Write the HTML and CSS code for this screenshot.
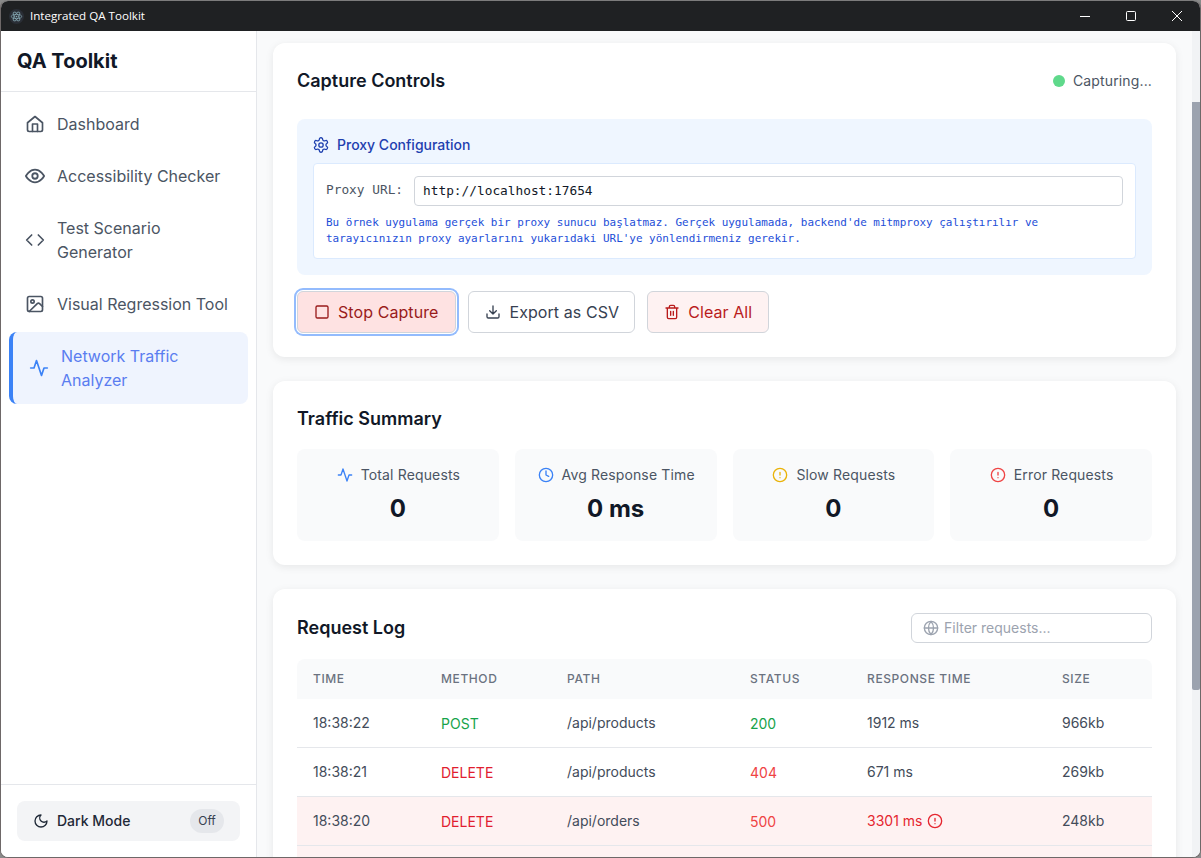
FILE: index.html
```html
<!DOCTYPE html>
<html lang="en">
<head>
  <meta charset="UTF-8" />
  <title>Integrated QA Toolkit</title>
  <link rel="stylesheet" href="styles.css">
</head>
<body>
<div class="window">

  <div class="titlebar">
    <div class="app-title">
      <svg class="app-logo" viewBox="0 0 16 16" fill="none" stroke="#86a9b5" stroke-width="0.8">
        <circle cx="8" cy="8" r="8" fill="#2a2e36" stroke="none"/>
        <ellipse cx="8" cy="8" rx="5.500" ry="2.200"/>
        <ellipse cx="8" cy="8" rx="5.500" ry="2.200" transform="rotate(60 8 8)"/>
        <ellipse cx="8" cy="8" rx="5.500" ry="2.200" transform="rotate(120 8 8)"/>
        <circle cx="8" cy="8" r="0.900" fill="#86a9b5" stroke="none"/>
      </svg>
      <span class="app-name">Integrated QA Toolkit</span>
    </div>
    <div class="win-buttons">
      <svg viewBox="0 0 12 12" class="win-btn" fill="none" stroke="#fff"><path d="M1 6.5h10"/></svg>
      <svg viewBox="0 0 12 12" class="win-btn" fill="none" stroke="#fff"><rect x="1.5" y="1.5" width="9" height="9" rx="1"/></svg>
      <svg viewBox="0 0 12 12" class="win-btn" fill="none" stroke="#fff"><path d="M1 1l10 10M11 1L1 11"/></svg>
    </div>
  </div>

  <div class="app">
    <aside class="sidebar">
      <div class="brand">QA Toolkit</div>
      <nav class="nav">
        <a class="nav-item">
          <svg class="ico ico-20" viewBox="0 0 24 24"><path d="M3 10.5 12 3l9 7.5V19a2 2 0 0 1-2 2H5a2 2 0 0 1-2-2z"/><path d="M9 21v-9h6v9"/></svg>
          <span>Dashboard</span>
        </a>
        <a class="nav-item">
          <svg class="ico ico-20" viewBox="1 1 22 22"><path d="M2 12s3.600-7 10-7 10 7 10 7-3.600 7-10 7-10-7-10-7z"/><circle cx="12" cy="12" r="3"/></svg>
          <span>Accessibility Checker</span>
        </a>
        <a class="nav-item">
          <svg class="ico ico-20" viewBox="0 0 24 24"><path d="m8 6-6 6 6 6M16 6l6 6-6 6"/></svg>
          <span>Test Scenario Generator</span>
        </a>
        <a class="nav-item">
          <svg class="ico ico-20" viewBox="0 0 24 24"><rect x="3" y="3" width="18" height="18" rx="2"/><circle cx="9" cy="9" r="2"/><path d="m21 15-3.500-3.500a2 2 0 0 0-2.800 0L5 21"/></svg>
          <span>Visual Regression Tool</span>
        </a>
        <a class="nav-item active">
          <svg class="ico ico-20" viewBox="0 0 24 24"><path d="M22 12h-4l-3 9L9 3l-3 9H2"/></svg>
          <span>Network Traffic Analyzer</span>
        </a>
      </nav>
      <div class="sidebar-foot">
        <div class="dark-toggle">
          <svg class="ico ico-16" viewBox="0 0 24 24"><path d="M12 3a6 6 0 0 0 9 9 9 9 0 1 1-9-9z"/></svg>
          <span class="dark-label">Dark Mode</span>
          <span class="pill">Off</span>
        </div>
      </div>
    </aside>

    <main class="main">
      <section class="card">
        <div class="card-head">
          <h2>Capture Controls</h2>
          <div class="capturing"><i class="dot"></i>Capturing...</div>
        </div>
        <div class="proxy-box">
          <div class="proxy-title">
            <svg class="ico ico-16 thin" viewBox="1 1 22 22"><path d="M12.220 2h-.44a2 2 0 0 0-2 2v.18a2 2 0 0 1-1 1.730l-.43.25a2 2 0 0 1-2 0l-.15-.08a2 2 0 0 0-2.730.73l-.22.38a2 2 0 0 0 .73 2.730l.15.1a2 2 0 0 1 1 1.720v.51a2 2 0 0 1-1 1.740l-.15.09a2 2 0 0 0-.73 2.730l.22.38a2 2 0 0 0 2.730.73l.15-.08a2 2 0 0 1 2 0l.43.25a2 2 0 0 1 1 1.730V20a2 2 0 0 0 2 2h.44a2 2 0 0 0 2-2v-.18a2 2 0 0 1 1-1.730l.43-.25a2 2 0 0 1 2 0l.15.08a2 2 0 0 0 2.730-.73l.22-.39a2 2 0 0 0-.73-2.730l-.15-.08a2 2 0 0 1-1-1.740v-.5a2 2 0 0 1 1-1.740l.15-.09a2 2 0 0 0 .73-2.730l-.22-.38a2 2 0 0 0-2.730-.73l-.15.08a2 2 0 0 1-2 0l-.43-.25a2 2 0 0 1-1-1.730V4a2 2 0 0 0-2-2z"/><circle cx="12" cy="12" r="3"/></svg>
            <span>Proxy Configuration</span>
          </div>
          <div class="proxy-inner">
            <div class="proxy-row">
              <label class="proxy-label">Proxy URL:</label>
              <div class="proxy-input">http://localhost:17654</div>
            </div>
            <p class="proxy-note">Bu örnek uygulama gerçek bir proxy sunucu başlatmaz. Gerçek uygulamada, backend'de mitmproxy çalıştırılır ve tarayıcınızın proxy ayarlarını yukarıdaki URL'ye yönlendirmeniz gerekir.</p>
          </div>
        </div>
        <div class="actions">
          <button class="btn btn-stop">
            <svg class="ico ico-16" viewBox="0 0 24 24"><rect x="3" y="3" width="18" height="18" rx="2"/></svg>
            Stop Capture
          </button>
          <button class="btn btn-export">
            <svg class="ico ico-16" viewBox="0 0 24 24"><path d="M21 15v4a2 2 0 0 1-2 2H5a2 2 0 0 1-2-2v-4"/><path d="m7 10 5 5 5-5M12 15V3"/></svg>
            Export as CSV
          </button>
          <button class="btn btn-clear">
            <svg class="ico ico-16" viewBox="0 0 24 24"><path d="M3 6h18M19 6v14a2 2 0 0 1-2 2H7a2 2 0 0 1-2-2V6M8 6V4a2 2 0 0 1 2-2h4a2 2 0 0 1 2 2v2M10 11v6M14 11v6"/></svg>
            Clear All
          </button>
        </div>
      </section>

      <section class="card">
        <h2 class="summary-title">Traffic Summary</h2>
        <div class="stats">
          <div class="stat">
            <div class="stat-label">
              <svg class="ico ico-16 c-blue" viewBox="0 0 24 24"><path d="M22 12h-4l-3 9L9 3l-3 9H2"/></svg>
              Total Requests
            </div>
            <div class="stat-value">0</div>
          </div>
          <div class="stat">
            <div class="stat-label">
              <svg class="ico ico-16 c-blue" viewBox="0 0 24 24"><circle cx="12" cy="12" r="10"/><path d="M12 6v6l4 2"/></svg>
              Avg Response Time
            </div>
            <div class="stat-value">0 ms</div>
          </div>
          <div class="stat">
            <div class="stat-label">
              <svg class="ico ico-16 c-yellow" viewBox="0 0 24 24"><circle cx="12" cy="12" r="10"/><path d="M12 8v4M12 16h.01"/></svg>
              Slow Requests
            </div>
            <div class="stat-value">0</div>
          </div>
          <div class="stat">
            <div class="stat-label">
              <svg class="ico ico-16 c-red" viewBox="0 0 24 24"><circle cx="12" cy="12" r="10"/><path d="M12 8v4M12 16h.01"/></svg>
              Error Requests
            </div>
            <div class="stat-value">0</div>
          </div>
        </div>
      </section>

      <section class="card card-log">
        <div class="log-head">
          <h2>Request Log</h2>
          <div class="filter">
            <svg class="ico ico-16" viewBox="0 0 24 24"><circle cx="12" cy="12" r="10"/><path d="M2 12h20M12 2a15 15 0 0 1 0 20 15 15 0 0 1 0-20z"/></svg>
            <span>Filter requests...</span>
          </div>
        </div>
        <table class="log">
          <thead>
            <tr>
              <th class="col-time">Time</th>
              <th class="col-method">Method</th>
              <th class="col-path">Path</th>
              <th class="col-status">Status</th>
              <th class="col-resp">Response Time</th>
              <th class="col-size">Size</th>
            </tr>
          </thead>
          <tbody>
            <tr>
              <td>18:38:22</td>
              <td class="tag method-ok">POST</td>
              <td>/api/products</td>
              <td class="tag status-ok">200</td>
              <td>1912 ms</td>
              <td>966kb</td>
            </tr>
            <tr>
              <td>18:38:21</td>
              <td class="tag method-bad">DELETE</td>
              <td>/api/products</td>
              <td class="tag status-bad">404</td>
              <td>671 ms</td>
              <td>269kb</td>
            </tr>
            <tr class="row-bad">
              <td>18:38:20</td>
              <td class="tag method-bad">DELETE</td>
              <td>/api/orders</td>
              <td class="tag status-bad">500</td>
              <td class="slow">3301 ms
                <svg class="ico ico-16" viewBox="0 0 24 24"><circle cx="12" cy="12" r="10"/><path d="M12 8v4M12 16h.01"/></svg>
              </td>
              <td>248kb</td>
            </tr>
            <tr class="row-bad">
              <td></td><td></td><td></td><td></td><td></td><td></td>
            </tr>
          </tbody>
        </table>
      </section>
    </main>

    <div class="scrollbar"><div class="thumb"></div></div>
  </div>
</div>
</body>
</html>
```

FILE: styles.css
```css
* { box-sizing: border-box; }

html, body {
  height: 100%;
  margin: 0;
  background: #8a8a8a;
  overflow: hidden;
}

body {
  font-family: Inter, "Noto Sans", sans-serif;
  font-size: 14px;
  line-height: 20px;
  color: #374151;
}

.window {
  height: 100vh;
  display: flex;
  flex-direction: column;
  border: 1px solid #6e6868;
  border-top-color: #7c7c7c;
  border-radius: 8px;
  overflow: hidden;
  background: #fff;
}

/* title bar */
.titlebar {
  height: 30px;
  flex: none;
  background: #1f2123;
  color: #fff;
  display: flex;
  align-items: center;
  justify-content: space-between;
  font-family: "Open Sans", sans-serif;
  font-size: 11.600px;
}

.app-title {
  display: flex;
  align-items: center;
  gap: 6px;
  padding-left: 8px;
}

.app-name { padding-bottom: 1px; }

.app-logo { width: 15px; height: 15px; }

.win-buttons { display: flex; }

.win-btn {
  width: 12px;
  height: 12px;
  margin: 0 17px 0 17px;
}

/* layout */
.app {
  flex: 1;
  min-height: 0;
  display: flex;
}

.sidebar {
  width: 256px;
  flex: none;
  display: flex;
  flex-direction: column;
  background: #fff;
  border-right: 1px solid #e5e7eb;
}

.brand {
  height: 61px;
  padding: 0 16px;
  display: flex;
  align-items: center;
  font-size: 20px;
  font-weight: 700;
  color: #111827;
  border-bottom: 1px solid #e5e7eb;
}

.nav {
  flex: 1;
  padding: 8px;
  display: flex;
  flex-direction: column;
  gap: 4px;
}

.nav-item {
  display: flex;
  align-items: center;
  gap: 12px;
  padding: 12px 16px;
  font-size: 16px;
  line-height: 24px;
  color: #4b5563;
  border-radius: 8px;
}

.nav-item.active {
  background: #eff4fe;
  color: #5a7df0;
  border-left: 4px solid #3b82f6;
}

.nav-item.active .ico { color: #3b82f6; }

.ico {
  flex: none;
  fill: none;
  stroke: currentColor;
  stroke-width: 2;
  stroke-linecap: round;
  stroke-linejoin: round;
}

.ico-20 { width: 20px; height: 20px; }
.ico-16 { width: 16px; height: 16px; }

.sidebar-foot {
  padding: 16px;
  border-top: 1px solid #e5e7eb;
}

.dark-toggle {
  height: 40px;
  display: flex;
  align-items: center;
  padding: 0 16px;
  gap: 8px;
  background: #f3f4f6;
  border-radius: 8px;
  color: #1f2937;
}

.dark-label { font-weight: 500; flex: 1; }

.pill {
  width: 34px;
  height: 24px;
  line-height: 24px;
  text-align: center;
  font-size: 12px;
  color: #374151;
  background: #e5e7eb;
  border-radius: 12px;
}

/* main column */
.main {
  flex: 1;
  min-width: 0;
  overflow: hidden;
  padding: 12px 16px 0;
  background: #f9fafb;
  display: flex;
  flex-direction: column;
  gap: 24px;
}

.scrollbar {
  width: 8px;
  flex: none;
  background: #f1f3f5;
  padding-top: 71px;
}

.thumb {
  height: 588px;
  background: #9ca3af;
  border-radius: 0 0 2px 2px;
}

.card {
  flex: none;
  background: #fff;
  border-radius: 12px;
  padding: 24px;
  box-shadow: 0 2px 8px rgba(0, 0, 0, 0.08);
}

.card-log { padding-bottom: 0; }

h2 {
  margin: 0;
  font-size: 18px;
  line-height: 28px;
  font-weight: 600;
  color: #111827;
}

.card-head {
  display: flex;
  align-items: center;
  justify-content: space-between;
  margin-bottom: 24px;
}

.capturing {
  display: flex;
  align-items: center;
  gap: 8px;
  color: #4b5563;
  letter-spacing: 0.01em;
}

.dot {
  width: 12px;
  height: 12px;
  border-radius: 50%;
  background: #5fd98b;
}

.proxy-box {
  background: #eff6ff;
  border-radius: 8px;
  padding: 16px;
}

.proxy-title {
  display: flex;
  align-items: center;
  gap: 8px;
  height: 20px;
  margin-bottom: 8px;
  font-weight: 500;
  color: #1e40af;
}

.thin { stroke-width: 1.800; }

.proxy-inner {
  background: #fff;
  border: 1px solid #dbeafe;
  border-radius: 4px;
  padding: 12px;
  height: 96px;
}

.proxy-row {
  display: flex;
  align-items: center;
  gap: 11px;
  margin-bottom: 9px;
}

.proxy-label {
  font-family: "DejaVu Sans Mono", monospace;
  font-size: 12.800px;
  line-height: 18px;
  padding-bottom: 2px;
  color: #4b5563;
}

.proxy-input {
  flex: 1;
  height: 30px;
  line-height: 28px;
  padding: 0 8px;
  border: 1px solid #d1d5db;
  border-radius: 4px;
  font-family: "DejaVu Sans Mono", monospace;
  font-size: 12.800px;
  color: #111827;
}

.proxy-note {
  margin: 0;
  font-family: "DejaVu Sans Mono", monospace;
  font-size: 10.960px;
  line-height: 16px;
  color: #1d4ed8;
}

.actions {
  display: flex;
  gap: 12px;
  margin-top: 16px;
}

.btn {
  height: 42px;
  display: flex;
  align-items: center;
  gap: 8px;
  padding: 0 16px;
  font-family: inherit;
  font-size: 16px;
  letter-spacing: 0.005em;
  border: 1px solid #d1d5db;
  border-radius: 6px;
  background: #fff;
}

.btn-stop {
  padding-right: 17px;
  background: #fee2e2;
  color: #991b1b;
  box-shadow: 0 0 0 1px #fff, 0 0 0 3px #93bbfd;
}

.btn-export {
  padding-right: 15px;
  color: #374151;
}

.btn-clear {
  background: #fef2f2;
  color: #b91c1c;
}

/* summary */
.summary-title { margin-bottom: 16px; }

.stats {
  display: grid;
  grid-template-columns: repeat(4, 1fr);
  gap: 16px;
}

.stat {
  background: #f9fafb;
  border-radius: 8px;
  padding: 16px;
  text-align: center;
}

.stat-label {
  display: flex;
  align-items: center;
  justify-content: center;
  gap: 8px;
  padding-left: 1px;
  letter-spacing: 0.01em;
  color: #4b5563;
}

.stat-value {
  margin-top: 8px;
  font-size: 24px;
  line-height: 32px;
  font-weight: 700;
  color: #111827;
}

.c-blue { color: #3b82f6; }
.c-yellow { color: #eab308; }
.c-red { color: #ef4444; }

/* request log */
.log-head {
  display: flex;
  align-items: center;
  justify-content: space-between;
  height: 30px;
  margin-bottom: 16px;
}

.filter {
  width: 241px;
  height: 30px;
  display: flex;
  align-items: center;
  gap: 5px;
  padding-left: 11px;
  border: 1px solid #d1d5db;
  border-radius: 6px;
  color: #9ca3af;
}

.log {
  width: 100%;
  border-collapse: separate;
  border-spacing: 0;
  table-layout: fixed;
}

.log th {
  height: 40px;
  padding: 0 16px 1px;
  background: #f9fafb;
  text-align: left;
  font-size: 12px;
  line-height: 16px;
  font-weight: 500;
  text-transform: uppercase;
  letter-spacing: 0.05em;
  color: #6b7280;
}

.log th:first-child { border-top-left-radius: 8px; }
.log th:last-child { border-top-right-radius: 8px; }

.col-time { width: 128px; }
.col-method { width: 126px; }
.col-path { width: 183px; }
.col-status { width: 117px; }
.col-resp { width: 195px; }
.col-size { width: 106px; }

.log td {
  height: 49px;
  padding: 0 16px;
  color: #434c5a;
  border-bottom: 1px solid #e5e7eb;
}

.log .tag { padding-top: 2px; }
.log .method-ok { color: #16a34a; }
.log .status-ok { color: #16a34a; }
.log .method-bad { color: #e11d2f; }
.log .status-bad { color: #ef4444; }
.log .slow { color: #e5262f; }

.log .slow .ico {
  vertical-align: -3px;
  margin-left: 1px;
}

.row-bad td { background: #fef2f2; }
```
